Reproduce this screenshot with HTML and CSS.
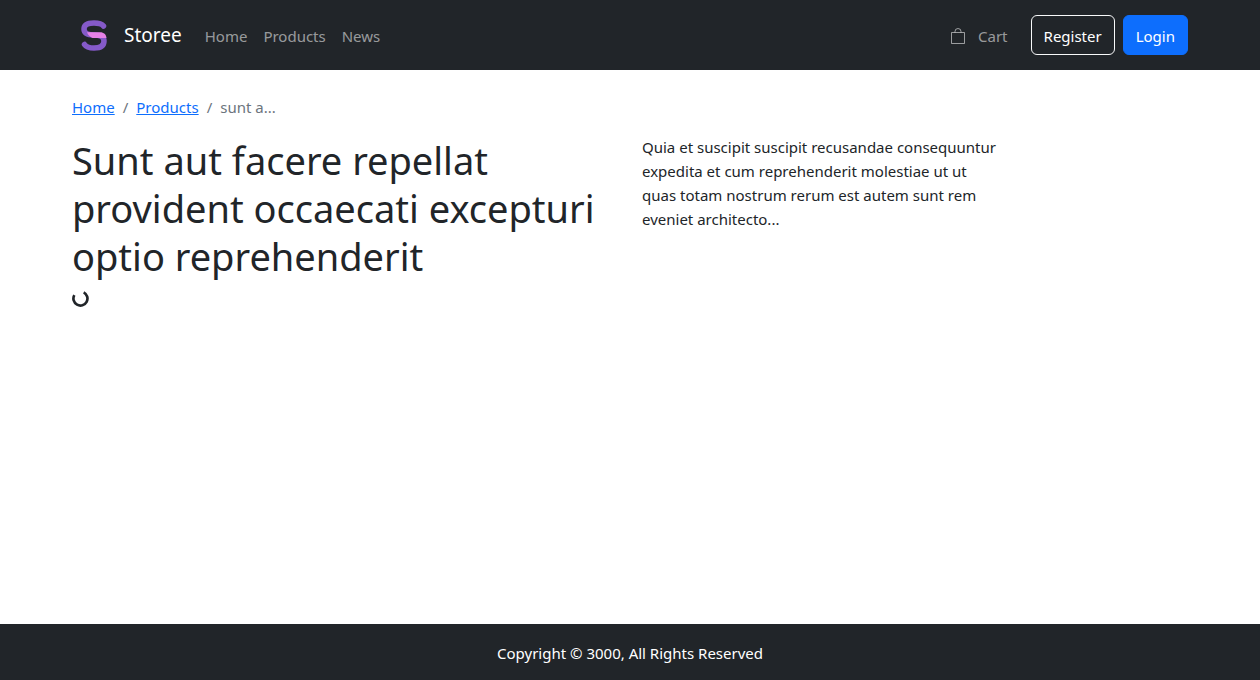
FILE: index.html
```html
<!DOCTYPE html>
<html lang="en">
<head>
<meta charset="utf-8">
<meta name="viewport" content="width=device-width, initial-scale=1">
<title>Storee</title>
<link rel="stylesheet" href="styles.css">
</head>
<body>
<header class="navbar">
  <div class="container navbar-inner">
    <a class="brand" href="#">
      <svg class="brand-logo" viewBox="0 0 44 44" aria-hidden="true">
        <path d="M31.500 13C29.500 10.500 27 10 22 10C15.500 10 12 12 12 16C12 20.500 16 22 22 22C28 22 32 23.500 32 28C32 32.500 28.500 35 22 35C17 35 14.500 34.500 12.500 31.500" fill="none" stroke="#855ac9" stroke-width="5.500" stroke-linecap="round" stroke-linejoin="round"/>
        <path d="M15 19.300H28C32 19.300 34 21.500 34.500 25H20.500C18 24 16 22 15 19.300Z" fill="#e681e6"/>
      </svg>
      <span>Storee</span>
    </a>
    <nav class="nav" aria-label="Main">
      <a class="nav-link" href="#">Home</a>
      <a class="nav-link" href="#">Products</a>
      <a class="nav-link" href="#">News</a>
    </nav>
    <div class="actions">
      <a class="nav-link cart-link" href="#">
        <svg class="cart-icon" viewBox="0 0 16 16" fill="none" stroke="currentColor" aria-hidden="true">
          <path d="M1.500 4.500H14.500V15.500H1.500ZM5 4.500V3.500A3 3 0 0 1 11 3.500V4.500"/>
        </svg>
        <span>Cart</span>
      </a>
      <button class="btn btn-outline" type="button">Register</button>
      <button class="btn btn-primary" type="button">Login</button>
    </div>
  </div>
</header>
<main class="container main">
  <nav aria-label="Breadcrumb">
    <ol class="breadcrumb">
      <li><a href="#">Home</a></li>
      <li><a href="#">Products</a></li>
      <li aria-current="page">sunt a...</li>
    </ol>
  </nav>
  <div class="product">
    <div class="product-title">
      <h1>Sunt aut facere repellat provident occaecati excepturi optio reprehenderit</h1>
      <div class="spinner" role="status" aria-label="Loading">
        <svg viewBox="0 0 16 16" aria-hidden="true"><path d="M2.200 4.800A6.600 6.600 0 1 0 11 2.200" fill="none" stroke="currentColor" stroke-width="2.500"/></svg>
      </div>
    </div>
    <p class="product-text">Quia et suscipit suscipit recusandae consequuntur expedita et cum reprehenderit molestiae ut ut quas totam nostrum rerum est autem sunt rem eveniet architecto...</p>
  </div>
</main>
<footer class="footer">Copyright © 3000, All Rights Reserved</footer>
</body>
</html>
```

FILE: styles.css
```css
*, *::before, *::after {
  box-sizing: border-box;
}

body {
  display: flex;
  flex-direction: column;
  min-height: 100vh;
  margin: 0;
  font: 15px/24px "Segoe UI", "Noto Sans", sans-serif;
  color: #212529;
  background: #fff;
}

.container {
  width: 100%;
  max-width: 1140px;
  margin: 0 auto;
  padding: 0 12px;
}

.navbar {
  padding: 8px 0;
  background: #212529;
}

.navbar-inner {
  display: flex;
  align-items: center;
  min-height: 54px;
}

.brand {
  display: flex;
  align-items: center;
  gap: 8px;
  margin-right: 15px;
  font-size: 19px;
  color: #fff;
  text-decoration: none;
}

.brand-logo {
  width: 44px;
  height: 44px;
}

.nav,
.actions {
  display: flex;
  align-items: center;
}

.nav-link {
  padding: 9px 8px 7px;
  color: rgba(255, 255, 255, 0.55);
  text-decoration: none;
}

.actions {
  gap: 8px;
  margin-left: auto;
}

.cart-link {
  display: flex;
  align-items: center;
  gap: 12px;
  margin-right: 7px;
}

.cart-icon {
  width: 16px;
  height: 16px;
}

.btn {
  padding: 8px 12px 6px;
  border: 1px solid;
  border-radius: 6px;
  font: inherit;
  color: #fff;
  cursor: pointer;
}

.btn-outline {
  border-color: #f8f9fa;
  background: transparent;
}

.btn-primary {
  border-color: #0d6efd;
  background: #0d6efd;
}

.main {
  flex: 1;
  padding-top: 25px;
}

.breadcrumb {
  display: flex;
  flex-wrap: wrap;
  margin: 0 0 16px;
  padding: 0;
  list-style: none;
  color: #6c757d;
}

.breadcrumb li + li::before {
  content: "/";
  padding: 0 8px;
}

.breadcrumb a {
  color: #0d6efd;
}

.product {
  display: flex;
  gap: 24px;
}

.product-title {
  flex: 0 0 calc(50% - 12px);
}

h1 {
  margin: 1px 0 10px;
  font-size: 38px;
  font-weight: 400;
  line-height: 48px;
}

.spinner {
  width: 17px;
  height: 17px;
}

.spinner svg {
  display: block;
}

.product-text {
  flex: 0 1 356px;
  margin: 0;
}

.footer {
  padding: 17px 16px 15px;
  color: #fff;
  text-align: center;
  background: #212529;
}
```
